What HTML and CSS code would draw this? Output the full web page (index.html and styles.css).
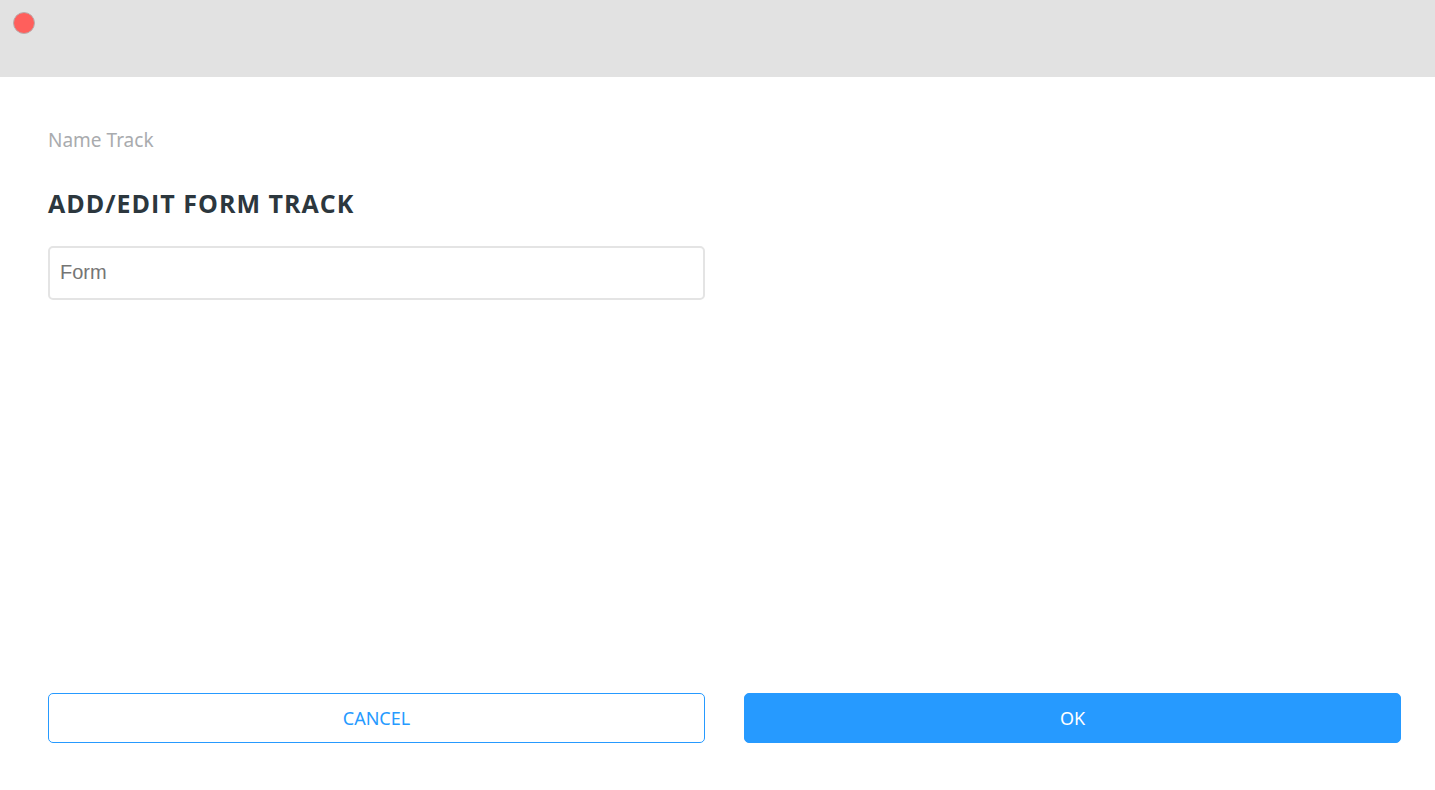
FILE: index.html
```html
<!DOCTYPE html>
<html lang="en">
  <head>
    <meta charset="UTF-8" />
    <meta name="viewport" content="width=device-width, initial-scale=1.0" />
    <title>Form Track</title>
    <link rel="stylesheet" href="styles.css" />
  </head>
  <body>
    <header class="titlebar">
      <button type="button" class="close-btn" aria-label="Close"></button>
    </header>
    <form class="track-form">
      <label class="track-label" for="track-name">Name Track</label>
      <h1 class="track-title">Add/Edit Form Track</h1>
      <div class="row">
        <input class="track-input" type="text" id="track-name" name="name" placeholder="Form" />
      </div>
      <div class="row actions">
        <button type="button" class="btn">CANCEL</button>
        <button type="submit" class="btn btn-primary">OK</button>
      </div>
    </form>
  </body>
</html>
```
FILE: styles.css
```css
* {
  box-sizing: border-box;
}
body {
  margin: 0;
  min-height: 100vh;
  display: flex;
  flex-direction: column;
  background-color: #fff;
  color: #2c373e;
  font-family: "Noto Sans", sans-serif;
}
.titlebar {
  height: 77px;
  padding: 12px 13px;
  background-color: #e2e2e2;
}
.close-btn {
  display: block;
  width: 22px;
  height: 22px;
  padding: 0;
  border: 1px solid #b9aeae;
  border-radius: 50%;
  background-color: #ff5f5c;
  cursor: pointer;
}
.track-form {
  flex: 1;
  display: flex;
  flex-direction: column;
  padding: 48px 34px 47px 48px;
}
.track-label {
  color: #a9abae;
  font-size: 19px;
  line-height: 30px;
}
.track-title {
  margin: 32px 0 26px;
  font-family: "Open Sans", sans-serif;
  font-size: 25px;
  line-height: 33px;
  letter-spacing: 1px;
  text-transform: uppercase;
}
.row {
  display: grid;
  grid-template-columns: 1fr 1fr;
  gap: 39px;
}
.track-input {
  height: 54px;
  padding: 0 10px 2px;
  border: 2px solid #e4e4e4;
  border-radius: 5px;
  font-family: "Liberation Sans", Arial, sans-serif;
  font-size: 20px;
}
.track-input::placeholder {
  color: #757575;
}
.actions {
  margin-top: auto;
}
.btn {
  height: 50px;
  border: 1px solid #269aff;
  border-radius: 5px;
  background-color: #fff;
  color: #269aff;
  font-family: inherit;
  font-size: 18px;
  cursor: pointer;
}
.btn-primary {
  background-color: #269aff;
  color: #fff;
}
```
